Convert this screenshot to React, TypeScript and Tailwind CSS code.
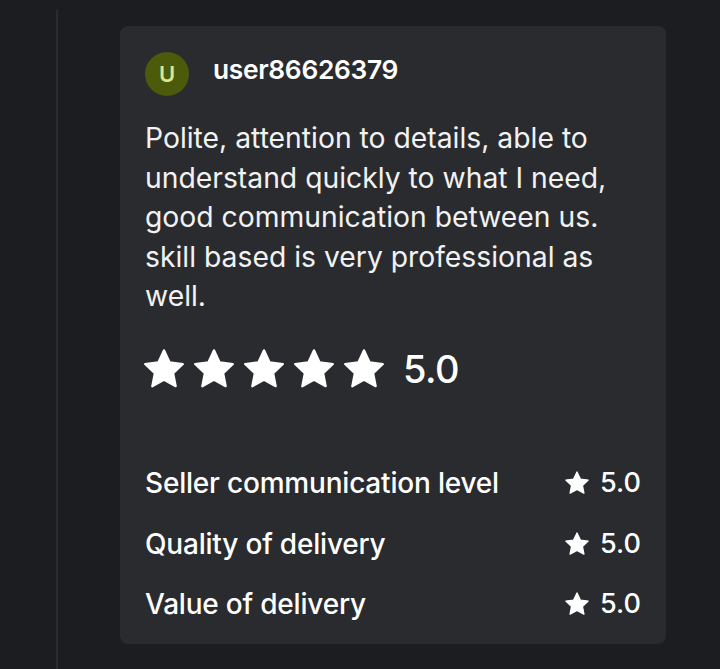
import React from 'react';

const StarIcon: React.FC<{ size: number }> = ({ size }) => (
  <svg width={size} height={size} viewBox="0 0 24 24" fill="#ffffff" stroke="#ffffff" strokeWidth={1.2} strokeLinejoin="round">
    <path d="M12 1.8l3.1 6.6 7.2.9-5.3 5 1.4 7.1L12 17.9l-6.4 3.5 1.4-7.1-5.3-5 7.2-.9z" />
  </svg>
);

const ratings = [
  { label: 'Seller communication level', value: '5.0' },
  { label: 'Quality of delivery', value: '5.0' },
  { label: 'Value of delivery', value: '5.0' },
];

const App: React.FC = () => {
  return (
    <div className="min-h-screen h-[669px] bg-[#1c1d20] flex overflow-hidden" style={{ fontFamily: 'Inter, "Noto Sans", sans-serif' }}>
      <div className="w-[58px] pt-[10px] shrink-0">
        <div className="h-full border-r-2 border-[#2b2c30]" />
      </div>

      <div className="pl-[62px] pt-[26px]">
        <div className="w-[546px] h-[618px] bg-[#2a2b2f] rounded-lg px-[25px] pt-[26px]">
          <div className="flex items-center gap-[24px]">
            <div className="w-[44px] h-[44px] rounded-full bg-[#4b5a0b] flex items-center justify-center text-[#d8e78c] text-[22px] font-semibold">
              U
            </div>
            <span className="text-white text-[26.3px] font-semibold tracking-[-0.3px] -mt-[8px]">user86626379</span>
          </div>

          <p className="mt-[23px] text-[#f2f2f2] text-[28.3px] leading-[39.5px]">
            Polite, attention to details, able to understand quickly to what I need, good communication between us. skill based is very professional as well.
          </p>

          <div className="mt-[24px] -ml-[3px] flex items-center">
            <div className="flex gap-[6px]">
              {[0, 1, 2, 3, 4].map((i) => (
                <StarIcon key={i} size={44} />
              ))}
            </div>
            <span className="ml-[17px] text-white text-[38px] font-medium tracking-[-0.5px]">5.0</span>
          </div>

          <div className="mt-[67px] flex flex-col gap-[23px]">
            {ratings.map((r) => (
              <div key={r.label} className="flex items-center justify-between h-[37.5px]">
                <span className="text-white text-[28px] font-medium tracking-[-0.2px]">{r.label}</span>
                <div className="flex items-center gap-[10px]">
                  <StarIcon size={26} />
                  <span className="text-white text-[27px] font-medium">{r.value}</span>
                </div>
              </div>
            ))}
          </div>
        </div>
      </div>
    </div>
  );
};

export default App;
